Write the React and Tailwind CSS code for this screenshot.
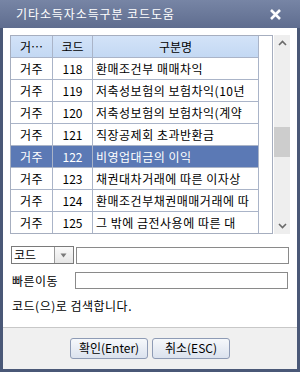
import React from "react";

const rows = [
  { type: "거주", code: "118", name: "환매조건부 매매차익" },
  { type: "거주", code: "119", name: "저축성보험의 보험차익(10년" },
  { type: "거주", code: "120", name: "저축성보험의 보험차익(계약" },
  { type: "거주", code: "121", name: "직장공제회 초과반환금" },
  { type: "거주", code: "122", name: "비영업대금의 이익", selected: true },
  { type: "거주", code: "123", name: "채권대차거래에 따른 이자상" },
  { type: "거주", code: "124", name: "환매조건부채권매매거래에 따" },
  { type: "거주", code: "125", name: "그 밖에 금전사용에 따른 대" },
];

const font = { fontFamily: '"Noto Sans CJK KR", "Liberation Sans", sans-serif' };

export default function App() {
  return (
    <div className="w-[300px] h-[372px] bg-[#4a5877] flex flex-col text-[12px] text-black" style={font}>
      {/* Title bar */}
      <div className="h-[28px] shrink-0 flex items-center justify-between pl-[16px] pr-[19px] bg-gradient-to-b from-[#7785a5] to-[#5f6d8f] text-white">
        <span className="text-[12px] leading-none tracking-[0.9px]">기타소득자소득구분 코드도움</span>
        <svg width="11" height="11" viewBox="0 0 11 11">
          <path d="M1 1 L10 10 M10 1 L1 10" stroke="#ffffff" strokeWidth="2.6" />
        </svg>
      </div>

      {/* Body */}
      <div className="mx-[3px] bg-white flex flex-col flex-1">
        <div className="px-[7px] pt-[7px] flex gap-[1px]">
          {/* Grid */}
          <div className="w-[263px] h-[199px] border border-[#a6aebf] overflow-hidden">
            <div className="flex h-[22px] bg-gradient-to-b from-[#d3e3f8] to-[#c3d8f3] border-b border-[#aab4c8] w-[248px]">
              <div className="w-[42px] border-r border-[#aab4c8] flex items-center justify-center">거…</div>
              <div className="w-[40px] border-r border-[#aab4c8] flex items-center justify-center">코드</div>
              <div className="w-[166px] border-r border-[#aab4c8] flex items-center justify-center">구분명</div>
            </div>
            {rows.map((r) => (
              <div
                key={r.code}
                className={`flex h-[22px] border-b border-[#aab4c8] w-[248px] ${
                  r.selected ? "bg-[#5b79b5] text-white" : "bg-white"
                }`}
              >
                <div className="w-[42px] border-r border-[#aab4c8] flex items-center justify-center tracking-[0.5px]">{r.type}</div>
                <div className="w-[40px] border-r border-[#aab4c8] flex items-center justify-center">{r.code}</div>
                <div className="w-[166px] border-r border-[#aab4c8] flex items-center pl-[3px] overflow-hidden whitespace-nowrap tracking-[0.5px]">
                  {r.name}
                </div>
              </div>
            ))}
          </div>

          {/* Scrollbar */}
          <div className="w-[16px] h-[199px] bg-[#eeeeee] flex flex-col items-center justify-between py-[5px] relative">
            <svg width="9" height="6" viewBox="0 0 9 6">
              <path d="M1 5 L4.5 1.5 L8 5" stroke="#6a6a6a" strokeWidth="1.6" fill="none" />
            </svg>
            <div className="absolute left-0 top-[92px] w-[16px] h-[30px] bg-[#cdcdcd]" />
            <svg width="9" height="6" viewBox="0 0 9 6">
              <path d="M1 1 L4.5 4.5 L8 1" stroke="#6a6a6a" strokeWidth="1.6" fill="none" />
            </svg>
          </div>
        </div>

        {/* Search row */}
        <div className="flex items-center px-[8px] mt-[12px] gap-[2px]">
          <div className="w-[63px] h-[18px] border border-[#7a7a7a] flex">
            <div className="flex-1 flex items-center pl-[2px] leading-none">코드</div>
            <div className="w-[19px] border-l border-[#9a9a9a] bg-gradient-to-b from-[#fafafa] to-[#e6e6e6] flex items-center justify-center">
              <svg width="7" height="5" viewBox="0 0 7 5">
                <path d="M0.5 0.5 L6.5 0.5 L3.5 4.5 Z" fill="#7a7a7a" />
              </svg>
            </div>
          </div>
          <div className="w-[215px] h-[17px] border border-[#8a8a8a]" />
        </div>

        <div className="flex items-center px-[9px] mt-[8px]">
          <div className="w-[63px] leading-none tracking-[0.5px]">빠른이동</div>
          <div className="w-[215px] h-[17px] border border-[#8a8a8a]" />
        </div>

        <div className="px-[9px] mt-[11px] leading-none tracking-[0.5px]">코드(으)로 검색합니다.</div>

        {/* Footer */}
        <div className="mt-auto h-[42px] border-t border-[#c8c8c8] bg-[#f0f0f0] flex items-center justify-center gap-[4px] pb-[1px]">
          <button className="w-[78px] h-[21px] rounded-[3px] border border-[#8e9bb5] bg-gradient-to-b from-[#f6f8fb] to-[#dbe2ee] text-[12px] leading-none">
            확인(Enter)
          </button>
          <button className="w-[78px] h-[21px] rounded-[3px] border border-[#8e9bb5] bg-gradient-to-b from-[#f6f8fb] to-[#dbe2ee] text-[12px] leading-none">
            취소(ESC)
          </button>
        </div>
      </div>
      <div className="h-[3px] shrink-0" />
    </div>
  );
}
